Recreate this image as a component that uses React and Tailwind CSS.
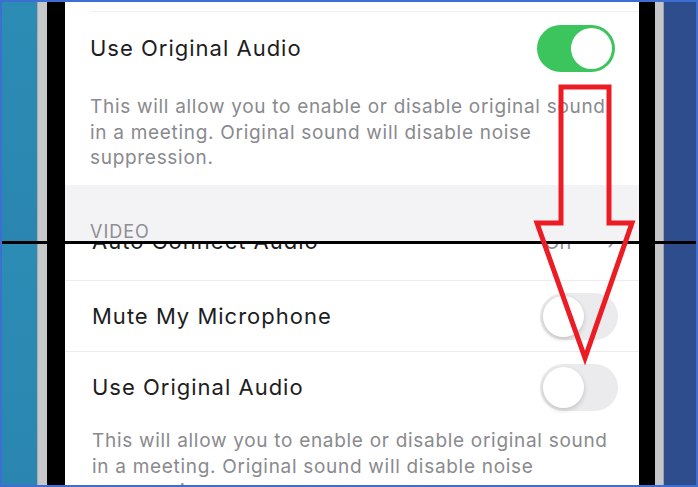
import React from "react";

const font = { fontFamily: "Inter, 'Liberation Sans', sans-serif" };

function Toggle({ on }) {
  if (on) {
    return (
      <div className="w-[78px] h-[47px] rounded-full bg-[#3cc55c] p-[3px] flex justify-end">
        <div className="w-[41px] h-[41px] rounded-full bg-white" />
      </div>
    );
  }
  return (
    <div className="w-[78px] h-[47px] rounded-full bg-[#ebebed] p-[3px] flex justify-start">
      <div className="w-[41px] h-[41px] rounded-full bg-white shadow-[0_2px_5px_rgba(0,0,0,0.18)]" />
    </div>
  );
}

function SideLeft({ bottom }) {
  return (
    <div className="flex h-full">
      <div className={`w-[37px] h-full bg-gradient-to-b from-[#2c8cb4] to-[#2a86b0] ${bottom ? "border-l-2 border-[#2b5ea8]" : ""}`} />
      <div className="w-[10px] h-full bg-[#c6c8ca] border-l border-[#a9adb0]" />
      <div className="w-[18px] h-full bg-black" />
    </div>
  );
}

function SideRight() {
  return (
    <div className="flex h-full">
      <div className="w-[16px] h-full bg-black" />
      <div className="w-[9px] h-full bg-[#c4c6c9] border-r border-[#9ea3a8]" />
      <div className="w-[34px] h-full bg-[#2e4d8c]" />
    </div>
  );
}

export default function App() {
  return (
    <div className="relative w-[698px] h-[487px] overflow-hidden bg-white" style={font}>
      {/* top screenshot */}
      <div className="flex h-[241px]">
        <SideLeft />
        <div className="flex-1 flex flex-col overflow-hidden bg-white">
          <div className="h-[12px] shrink-0 border-b border-[#f0f0f2] ml-[25px]" />
          <div className="h-[72px] shrink-0 flex items-center justify-between pl-[25px] pr-[24px]">
            <span className="text-[22px] tracking-[1px] text-[#1d1d1f]">Use Original Audio</span>
            <Toggle on />
          </div>
          <p className="shrink-0 mt-[10px] pl-[25px] pr-[22px] text-[19px] tracking-[0.7px] leading-[25.5px] text-[#8a8a8e]">
            This will allow you to enable or disable original sound in a meeting. Original sound will disable noise suppression.
          </p>
          <div className="shrink-0 mt-[14px] h-[70px] bg-[#f3f3f5] pl-[25px] pt-[35px]">
            <span className="text-[18px] tracking-[1px] leading-[22px] text-[#8e8e93]">VIDEO</span>
          </div>
        </div>
        <SideRight />
      </div>

      <div className="h-[3px] bg-black" />

      {/* bottom screenshot */}
      <div className="flex h-[243px]">
        <SideLeft bottom />
        <div className="flex-1 flex flex-col overflow-hidden bg-white">
          <div className="shrink-0 -mt-[33px]">
            <div className="h-[70px] flex items-center justify-between pl-[27px] pr-[24px] pb-[8px] border-b border-[#ececef]">
              <span className="text-[22px] tracking-[1px] text-[#1d1d1f]">Auto Connect Audio</span>
              <div className="flex items-center gap-[36px] text-[20px] text-[#8e8e93]">
                <span>On</span>
                <span>›</span>
              </div>
            </div>
            <div className="h-[71px] flex items-center justify-between pl-[27px] pr-[21px] border-b border-[#ececef]">
              <span className="text-[22px] tracking-[1px] text-[#1d1d1f]">Mute My Microphone</span>
              <Toggle />
            </div>
            <div className="h-[71px] flex items-center justify-between pl-[27px] pr-[21px]">
              <span className="text-[22px] tracking-[1px] text-[#1d1d1f]">Use Original Audio</span>
              <Toggle />
            </div>
            <p className="mt-[5px] pl-[27px] pr-[20px] text-[19px] tracking-[0.7px] leading-[25.5px] text-[#8a8a8e]">
              This will allow you to enable or disable original sound in a meeting. Original sound will disable noise suppression.
            </p>
          </div>
        </div>
        <SideRight />
      </div>

      {/* red arrow annotation */}
      <svg className="absolute inset-0 pointer-events-none" width="698" height="487" viewBox="0 0 698 487">
        <polygon
          points="561,87 609,87 609,223 632,223 585,358 537,223 561,223"
          fill="none"
          stroke="#ec1c24"
          strokeWidth="5"
          strokeLinejoin="miter"
        />
      </svg>

      {/* outer frame */}
      <div className="absolute inset-0 border-2 border-[#3d6fd3] pointer-events-none" />
    </div>
  );
}
